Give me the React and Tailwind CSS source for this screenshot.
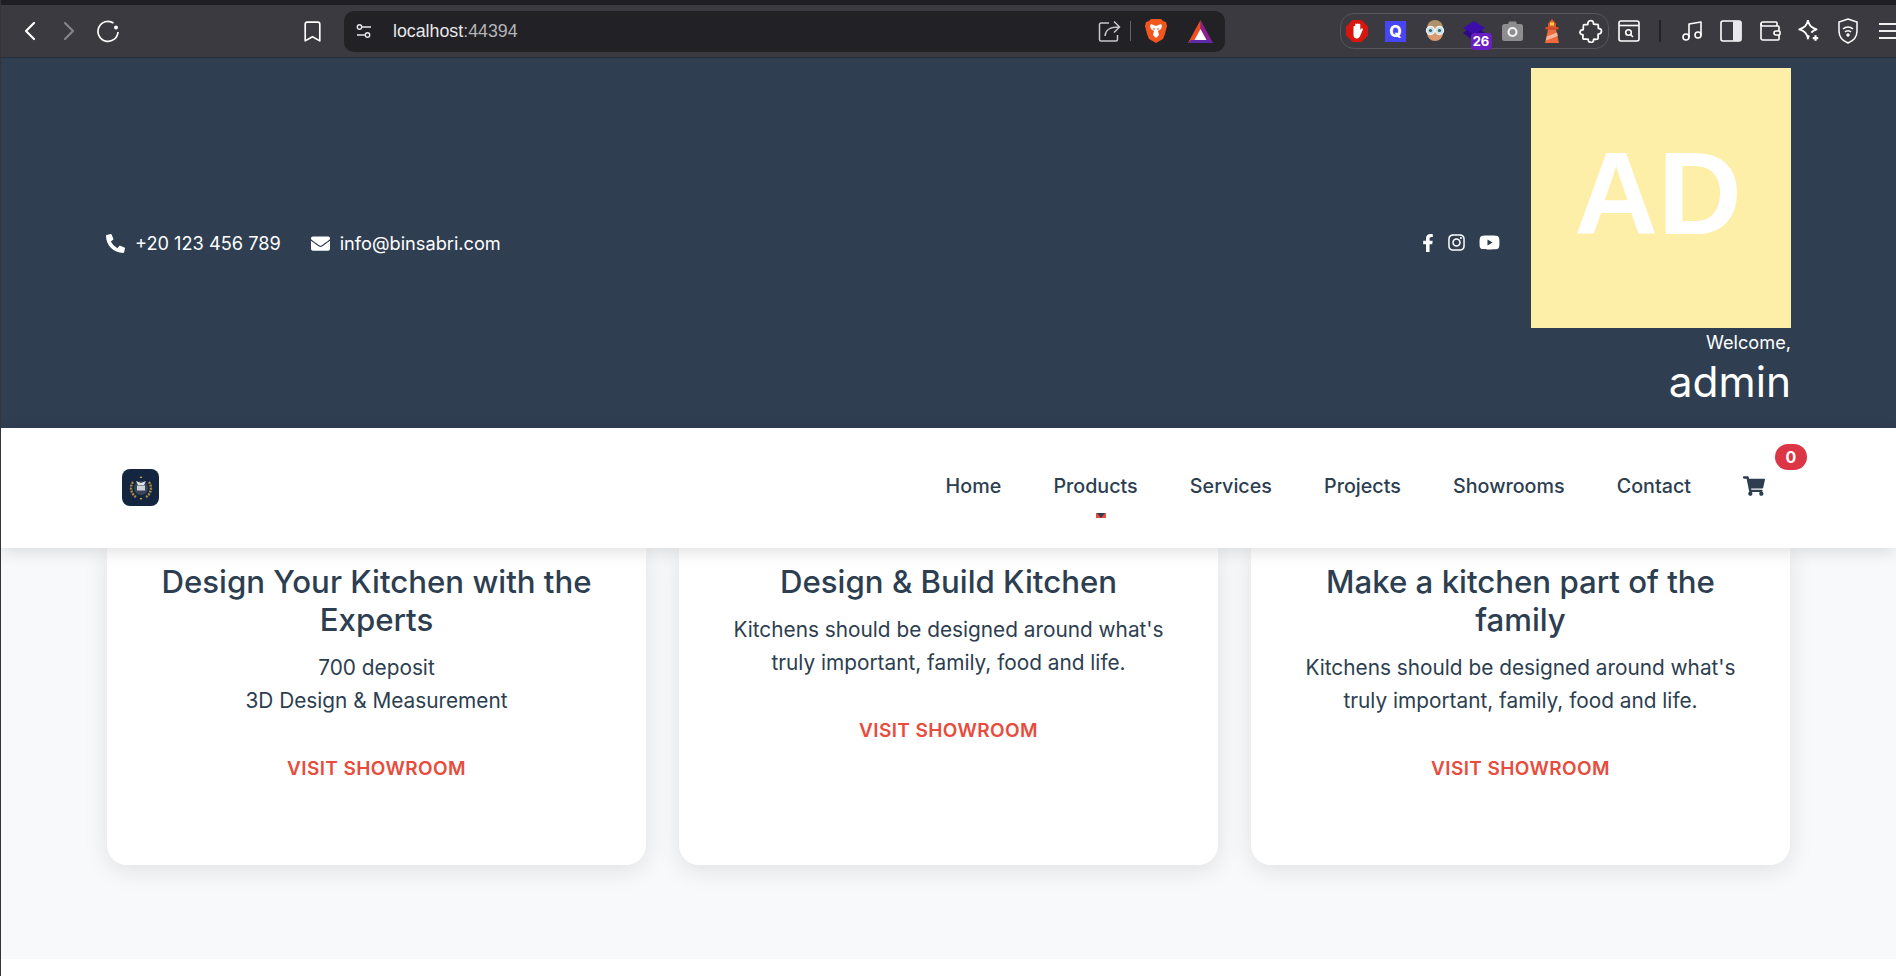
import React from "react";
import { FaPhoneAlt, FaEnvelope, FaFacebookF, FaInstagram, FaYoutube, FaShoppingCart } from "react-icons/fa";
import { ChevronLeft, ChevronRight, Bookmark, Music, Wallet } from "lucide-react";

const navLinks = ["Home", "Products", "Services", "Projects", "Showrooms", "Contact"];

const cards = [
  { title: "Design Your Kitchen with the Experts", lines: ["700 deposit", "3D Design & Measurement"] },
  { title: "Design & Build Kitchen", lines: ["Kitchens should be designed around what's", "truly important, family, food and life."] },
  { title: "Make a kitchen part of the family", lines: ["Kitchens should be designed around what's", "truly important, family, food and life."] },
];

const Slot = ({ children, className = "" }) => (
  <div className={`w-[39px] h-[39px] flex items-center justify-center shrink-0 ${className}`}>{children}</div>
);

const BrowserBar = () => (
  <div className="shrink-0 font-['Inter',sans-serif]">
    <div className="h-[5px] bg-[#1e1e24]" />
    <div className="h-[53px] bg-[#3a3a40] border-b border-[#2a2d36] flex items-center text-white">
      {/* nav buttons */}
      <div className="flex items-center pl-[9px] w-[292px] shrink-0">
        <Slot><ChevronLeft size={32} strokeWidth={1.6} /></Slot>
        <Slot><ChevronRight size={32} strokeWidth={1.6} className="text-[#85858a]" /></Slot>
        <Slot>
          <svg width="24" height="24" viewBox="0 0 24 24" fill="none" stroke="currentColor" strokeWidth="1.7">
            <path d="M17.5 4A10 10 0 1 0 22 13" />
            <circle cx="20" cy="8.5" r="2" fill="currentColor" stroke="none" />
          </svg>
        </Slot>
      </div>
      <Slot><Bookmark size={25} strokeWidth={1.6} /></Slot>
      {/* url bar */}
      <div className="ml-[12px] w-[881px] h-[41px] shrink-0 rounded-[10px] bg-[#212126] flex items-center pl-[11px] pr-[7px]">
        <svg width="18" height="18" viewBox="0 0 18 18" fill="none" stroke="#e5e5e5" strokeWidth="1.4">
          <circle cx="4.5" cy="5" r="2.2" />
          <path d="M7 5h9M2 13h8" />
          <circle cx="12.5" cy="13" r="2.2" />
        </svg>
        <span className="ml-[20px] text-[17.800px] font-['Liberation_Sans',sans-serif] text-[#e8e8e8]">localhost<span className="text-[#b5b5b8]">:44394</span></span>
        <div className="flex-1" />
        <svg width="24" height="24" viewBox="0 0 24 24" fill="none" stroke="#c8c8ca" strokeWidth="1.5">
          <path d="M11 4H3a1.5 1.5 0 0 0-1.5 1.5v15A1.5 1.5 0 0 0 3 22h15a1.5 1.5 0 0 0 1.5-1.5V16" />
          <path d="M7 17c.5-6 4-9 14-9M16 2.5 21.5 8 16 13.5" />
        </svg>
        <div className="w-px h-[20px] bg-[#66666c] ml-[8px] mr-[14px]" />
        <svg width="22" height="26" viewBox="0 0 22 26">
          <path d="M6 1h10l2 2 3 1 1 4-2 8-2 5-7 4-7-4-2-5-2-8 1-4 3-1z" fill="#f1561d" />
          <path d="M11 8l5-2 1 2-1 3-3 2 1 4-3 3-3-3 1-4-3-2-1-3 1-2z" fill="#fff" />
          <path d="M8 11h2M12 11h2" stroke="#f1561d" strokeWidth="1.2" />
        </svg>
        <svg width="25" height="23" viewBox="0 0 25 23" className="ml-[21px] mr-[5px]">
          <path d="M12.5 0 25 23H18L12.5 12z" fill="#8a1f8f" />
          <path d="M12.5 0 0 23H7l5.5-11z" fill="#ef4e23" />
          <path d="M0 23l3-3h19l3 3z" fill="#5f2aa6" />
          <path d="M12.5 9l6 11h-12z" fill="#fff" />
        </svg>
      </div>
      {/* extensions */}
      <div className="ml-[115px] w-[269px] h-[36px] shrink-0 rounded-[14px] border border-[#56565c] flex items-center">
        <Slot className="-ml-[4px]">
          <svg width="22" height="22" viewBox="0 0 22 22">
            <path d="M6.5 0h9L22 6.5v9L15.5 22h-9L0 15.500v-9z" fill="#d8150f" />
            <path d="M7.500 12V7a1 1 0 0 1 1.600-.8V4.500a1 1 0 0 1 1.600-.6 1 1 0 0 1 1.800.2 1 1 0 0 1 1.800.6V10l1-1.500a1 1 0 0 1 1.500 1.200L14.500 15c-.8 2-1.800 3.500-3.800 3.500s-3.200-1.500-3.200-3.500z" fill="#fff" />
          </svg>
        </Slot>
        <Slot>
          <div className="w-[21px] h-[21px] bg-[#4646f5] flex items-center justify-center text-white text-[16px] leading-none font-extrabold">Q</div>
        </Slot>
        <Slot>
          <svg width="22" height="22" viewBox="0 0 22 22">
            <circle cx="11" cy="8" r="8" fill="#b09268" />
            <circle cx="11" cy="13" r="8" fill="#d99a72" />
            <path d="M4 9c2-4 11-4 14 0l-1-6H5z" fill="#b09268" />
            <circle cx="6.500" cy="10.500" r="4" fill="#bfe0e4" stroke="#eef2f2" strokeWidth="1.300" />
            <circle cx="15.500" cy="10.500" r="4" fill="#bfe0e4" stroke="#eef2f2" strokeWidth="1.300" />
            <circle cx="6.500" cy="10.500" r="1.600" fill="#3f6168" />
            <circle cx="15.500" cy="10.500" r="1.600" fill="#3f6168" />
          </svg>
        </Slot>
        <Slot>
          <div className="relative w-[22px] h-[20px]">
            <svg width="22" height="20" viewBox="0 0 22 20">
              <path d="M11 0l11 7-11 7L0 7z" fill="#3d0dab" />
              <path d="M0 12l4-3 7 5 7-5 4 3-11 8z" fill="#2c0a85" />
            </svg>
            <div className="absolute left-[8px] top-[12px] w-[21px] h-[17px] rounded-[4px] bg-[#6a1fc4] text-white text-[13px] leading-none font-bold flex items-center justify-center">26</div>
          </div>
        </Slot>
        <Slot>
          <svg width="21" height="20" viewBox="0 0 21 20">
            <path d="M6 3l1-2.500h7L15 3h3.500A2.500 2.500 0 0 1 21 5.500v12a2.500 2.500 0 0 1-2.500 2.500h-16A2.500 2.500 0 0 1 0 17.500v-12A2.500 2.500 0 0 1 2.500 3z" fill="#8d8d90" />
            <circle cx="10.500" cy="11" r="4" fill="#8d8d90" stroke="#f2f2f2" strokeWidth="2.200" />
          </svg>
        </Slot>
        <Slot>
          <svg width="16" height="24" viewBox="0 0 16 24">
            <path d="M4 4.500 8 0l4 4.500V8H4z" fill="#e2572f" />
            <rect x="6" y="3.500" width="4" height="3" fill="#ffd23f" />
            <rect x="1.500" y="8" width="13" height="2.500" fill="#d94d24" />
            <path d="M4 10.500h8L15 24H1z" fill="#ee6a3c" />
            <path d="M2.800 17.500 13 13.500l.8 3.500-11.800 4.500z" fill="#f8b79b" />
          </svg>
        </Slot>
        <Slot>
          <svg width="24" height="24" viewBox="0 0 24 24" fill="none" stroke="currentColor" strokeWidth="1.800" strokeLinejoin="round">
            <path d="M9 3.500c.6-2.300 4.600-2.600 5.400 0 .2.700 0 1.300.3 1.700.4.500 3.700-.3 4.300.3.600.700.1 3.300.4 3.800.3.400 1.500.1 2.300.9 1.300 1.300.8 4.100-1 4.600-.9.200-1.200-.1-1.500.3-.3.500.3 4-.4 4.800-.8.800-3.500.1-4 .4-.5.400 0 1.500-.8 2.300-1.300 1.200-3.700.9-4.500-.6-.4-.8 0-1.400-.4-1.800-.5-.4-4.300.3-5-.4-.6-.6.100-3.700-.2-4.100-.4-.4-1.600.2-2.400-.9-1-1.400-.3-3.500 1.300-3.900.7-.2 1.100.1 1.400-.3.300-.5-.2-4.200.5-4.800.700-.6 3.600.2 4-.2.400-.4.100-1.200.3-2.100z" />
          </svg>
        </Slot>
      </div>
      {/* right tools */}
      <div className="flex items-center">
        <Slot>
          <svg width="22" height="22" viewBox="0 0 22 22" fill="none" stroke="currentColor" strokeWidth="1.600">
            <rect x="1" y="1" width="20" height="20" rx="2" />
            <path d="M1 5.500h20" />
            <circle cx="10.500" cy="12.500" r="2.800" />
            <path d="M12.500 14.500l2.500 2.500" />
          </svg>
        </Slot>
        <div className="w-[2px] h-[22px] bg-[#222226] mx-[11px]" />
        <Slot><Music size={24} strokeWidth={1.6} /></Slot>
        <Slot>
          <svg width="22" height="22" viewBox="0 0 22 22">
            <rect x="1" y="1" width="20" height="20" rx="2" fill="none" stroke="currentColor" strokeWidth="1.600" />
            <rect x="13" y="1" width="8" height="20" rx="1" fill="#e8e8ee" />
          </svg>
        </Slot>
        <Slot><Wallet size={24} strokeWidth={1.6} /></Slot>
        <Slot>
          <svg width="26" height="26" viewBox="0 0 24 24" fill="none" stroke="currentColor" strokeWidth="1.700" strokeLinejoin="round">
            <path d="M11 2c1 5 3 7 8 8.500-2.500.8-3.800 1.600-4.800 3M11 2c-1 5-3 7-8 8.500 5 1.500 7 3.500 8 8.500.3-1.200.6-2.200 1-3" />
            <path d="M18 16v5M15.500 18.500h5" strokeWidth="2" />
          </svg>
        </Slot>
        <Slot>
          <svg width="22" height="26" viewBox="0 0 22 26" fill="none" stroke="currentColor" strokeWidth="1.500">
            <path d="M11 1l9 3v9c0 6-4 10-9 12-5-2-9-6-9-12V4z" />
            <path d="M6 11a7 7 0 0 1 10 0M8 14a4 4 0 0 1 6 0" />
            <circle cx="11" cy="17" r="1" fill="currentColor" />
          </svg>
        </Slot>
        <div className="w-[39px] pl-[12px] shrink-0">
          <div className="h-[2px] bg-[#f0f0f0] w-[28px]" />
          <div className="h-[2px] bg-[#f0f0f0] w-[28px] mt-[5px]" />
          <div className="h-[2px] bg-[#f0f0f0] w-[28px] mt-[5px]" />
        </div>
      </div>
    </div>
  </div>
);

const TopHeader = () => (
  <div className="h-[370px] shrink-0 bg-[#2f3e51] text-white pl-[105px] pr-[105px] flex items-center justify-between font-['Inter',sans-serif]">
    <div className="flex items-center text-[18.200px] mt-[2px]">
      <FaPhoneAlt size={19} />
      <span className="ml-[10px]">+20 123 456 789</span>
      <FaEnvelope size={19} className="ml-[30px]" />
      <span className="ml-[10px]">info@binsabri.com</span>
    </div>
    <div className="flex items-center">
      <div className="flex items-center mr-[31px] mt-[-1px]">
        <FaFacebookF size={18} className="-ml-[1px]" />
        <FaInstagram size={19} className="ml-[10px]" />
        <FaYoutube size={21} className="ml-[13px]" />
      </div>
      <div className="flex flex-col items-end pb-[11px]">
        <div className="w-[260px] h-[260px] bg-[#fdeea8] flex items-center justify-center pb-[9px] pr-[6px] text-white text-[116px] font-bold leading-none font-['Liberation_Sans',sans-serif]">
          AD
        </div>
        <div className="text-[18.200px] leading-[30px] -mt-[1px]">Welcome,</div>
        <div className="text-[42.400px] leading-[50px]">admin</div>
      </div>
    </div>
  </div>
);

const NavBar = () => (
  <nav className="relative z-10 h-[120px] shrink-0 bg-white shadow-[0_4px_16px_rgba(0,0,0,0.12)] pl-[121px] flex items-center font-['Inter',sans-serif]">
    {/* logo */}
    <div className="w-[37px] h-[37px] rounded-[8px] bg-[#14263f] flex items-center justify-center -mt-[1px]">
      <svg width="30" height="30" viewBox="0 0 30 30" fill="none">
        <path d="M7 9a10.500 10.500 0 0 0 3 15M23 9a10.500 10.500 0 0 1-3 15" stroke="#a98a3e" strokeWidth="2.400" strokeDasharray="2 1" />
        <circle cx="15" cy="15" r="7" fill="#3a4658" />
        <rect x="11" y="12.500" width="8" height="5" fill="#cfd3d8" />
        <path d="M10 8l5 2 5-2-2 4h-6z" fill="#dfe2e6" />
        <path d="M15 3l1.500 2h-3zM15 27l1.500-2h-3z" fill="#c9a64a" />
      </svg>
    </div>
    <div className="flex-1" />
    <ul className="flex items-center gap-[52.200px] text-[19.700px] font-medium text-[#2c3e50] -mt-[2px]">
      {navLinks.map((link) => (
        <li key={link} className="relative">
          {link}
          {link === "Products" && (
            <div className="absolute left-[43px] top-[41px] w-[10px] h-[5px] bg-[#e74c3c] flex justify-center">
              <div className="w-0 h-0 border-x-[4px] border-x-transparent border-t-[5px] border-t-[#2c3e50]" />
            </div>
          )}
        </li>
      ))}
    </ul>
    <div className="relative ml-[52px] mr-[131px] -mt-[4px] text-[#2c3e50]">
      <FaShoppingCart size={22} />
      <div className="absolute left-[32px] top-[-31px] w-[32px] h-[26px] rounded-full bg-[#dc3545] text-white text-[16px] font-bold flex items-center justify-center">0</div>
    </div>
  </nav>
);

const Card = ({ title, lines }) => (
  <div className="bg-white rounded-b-[20px] shadow-[0_5px_25px_rgba(0,0,0,0.1)] pt-[15px] px-[40px] text-center text-[#2c3e50]">
    <h3 className="text-[31.200px] leading-[38px] font-medium">{title}</h3>
    <p className="mt-[12px] text-[20.800px] leading-[33px]">
      {lines.map((line) => (
        <span key={line} className="block">{line}</span>
      ))}
    </p>
    <a className="block mt-[37px] text-[19px] leading-[30px] font-semibold tracking-[0.4px] text-[#e74c3c]">VISIT SHOWROOM</a>
  </div>
);

export default function App() {
  return (
    <div className="relative h-[976px] overflow-hidden bg-white border-l border-[#333338] flex flex-col">
      <BrowserBar />
      <TopHeader />
      <NavBar />
      <section className="h-[411px] shrink-0 bg-[#f8f9fa] pl-[106px] pr-[106px] pb-[94px] font-['Inter',sans-serif]">
        <div className="grid grid-cols-3 gap-[33px] h-full">
          {cards.map((card) => (
            <Card key={card.title} {...card} />
          ))}
        </div>
      </section>
    </div>
  );
}
